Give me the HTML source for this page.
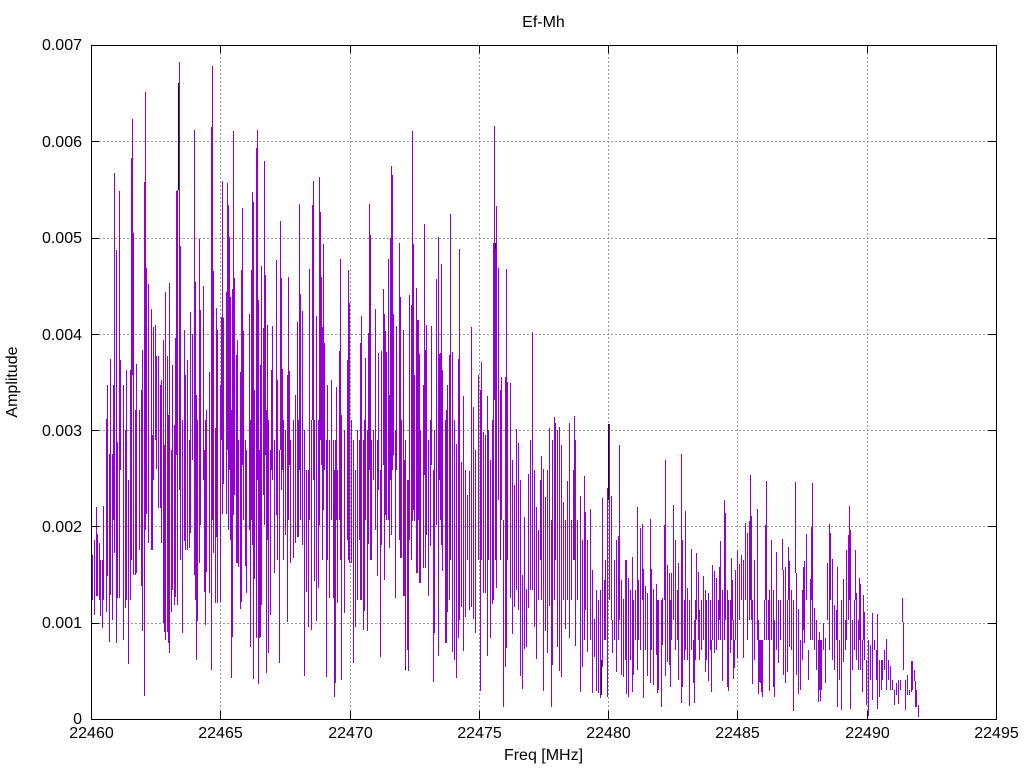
<!DOCTYPE html>
<html><head><meta charset="utf-8"><title>Ef-Mh</title>
<style>html,body{margin:0;padding:0;background:#fff}svg{display:block}text{font-family:"Liberation Sans",sans-serif;font-size:16px;fill:#000}</style></head>
<body>
<svg width="1024" height="768" viewBox="0 0 1024 768" xmlns="http://www.w3.org/2000/svg">
<rect width="1024" height="768" fill="#fff"/>
<g shape-rendering="crispEdges" fill="none">
<path stroke="#999" stroke-dasharray="2 2" d="M99 141.500H988M99 238.500H988M99 334.500H988M99 430.500H988M99 526.500H988M99 623.500H988M220.500 53V711M350.500 53V711M479.500 53V711M608.500 53V711M737.500 53V711M867.500 53V711"/>
<g transform="translate(.5,0)">
<path stroke="#000" d="M178 83V190M495 243V290M608 424V500M601 660V695M405 640V670"/>
<path stroke="#9400d3" d="M91 605V547M92 600V555M94 615V540M96 596V507M97 596V534M99 600V543M100 616V560M102 628V560M103 506V600M106 419V612M107 385V576M109 642V454M110 359V595M112 454V620M113 520V385M114 173V553M116 250V643M117 442V598M119 191V598M120 360V470M123 385V640M125 430V608M126 370V600M128 480V664M130 370V600M131 158V560M132 119V375M133 233V575M135 410V575M136 364V573M139 410V550M141 390V586M142 350V631M144 182V696M145 92V530M146 268V514M148 284V543M151 309V550M152 435V550M153 327V480M155 325V440M156 356V469M158 356V508M160 385V508M161 380V543M163 340V623M164 445V632M165 292V640M167 356V632M168 415V643M169 283V653M171 450V612M172 365V590M174 425V605M175 338V597M176 191V455M177 190V605M179 62V490M180 246V560M182 420V633M184 330V541M185 375V550M187 360V550M189 440V548M190 312V533M192 334V460M194 130V575M195 282V600M196 395V660M197 420V621M199 239V563M200 310V525M203 286V480M204 450V592M205 420V625M206 410V572M209 372V593M211 127V670M212 66V520M213 271V553M215 428V603M216 308V537M217 330V603M220 385V602M221 317V440M222 181V514M223 318V484M226 292V514M227 183V450M228 205V530M229 237V470M230 297V540M231 410V678M232 289V637M233 131V515M234 278V495M236 355V563M237 340V563M238 440V567M240 372V609M241 270V602M242 208V465M243 331V520M245 440V566M246 450V593M249 314V530M250 420V647M251 270V520M252 192V545M253 202V679M254 390V579M256 148V638M257 130V480M258 300V684M259 450V638M260 365V637M261 266V605M263 328V495M264 161V525M265 275V455M266 410V673M267 325V540M268 420V653M270 450V615M271 370V470M272 326V480M274 440V573M276 260V515M277 380V560M279 450V663M280 221V450M281 278V490M282 369V470M283 420V560M285 430V535M287 375V622M288 277V520M289 371V465M290 440V563M293 420V558M295 395V543M297 322V537M298 420V537M299 204V470M300 294V520M302 311V545M304 430V676M306 470V592M308 470V627M309 269V520M311 420V630M312 205V420M313 181V480M314 420V581M316 316V621M318 420V588M319 177V525M320 212V440M321 277V465M322 327V560M323 244V510M324 343V470M326 440V677M327 385V560M329 440V598M331 380V520M333 440V598M334 470V697M335 440V683M336 387V520M337 470V603M339 351V520M340 259V560M341 415V680M344 430V613M347 360V540M348 270V560M349 303V563M351 420V563M353 440V663M355 470V627M357 430V600M359 440V540M360 343V600M361 316V600M363 440V630M364 420V611M365 358V520M367 430V631M368 333V544M369 204V470M370 235V560M371 440V560M373 430V480M375 309V530M377 440V576M378 353V490M380 470V657M381 351V545M383 289V465M384 314V580M385 331V515M386 352V520M388 259V520M389 395V548M390 238V480M391 166V535M392 175V470M393 314V455M395 430V598M396 326V470M399 243V540M400 297V558M401 420V558M403 330V596M404 460V596M405 440V666M407 480V650M408 480V671M409 295V540M411 305V560M412 131V521M413 244V510M414 375V521M416 288V573M417 320V573M418 320V520M419 354V583M420 430V583M423 385V568M424 224V475M425 350V568M426 325V535M428 440V596M430 420V546M431 326V465M433 470V682M434 430V633M436 279V525M438 237V656M439 354V480M440 353V520M441 264V545M442 370V571M445 420V643M446 410V643M447 385V612M449 355V600M450 214V560M452 352V652M454 420V660M456 444V678M458 359V638M459 249V620M461 462V607M463 396V651M465 470V617M467 495V560M469 471V610M471 327V607M473 407V619M475 450V633M478 375V560M480 390V691M481 362V560M483 432V593M485 435V593M487 396V656M488 430V560M490 460V638M492 420V604M494 126V400M493 243V600M495 249V560M496 206V588M498 268V500M500 390V560M501 377V520M503 520V707M505 377V667M506 269V648M507 382V560M510 383V598M512 460V634M514 485V607M516 429V590M518 443V610M520 480V676M522 575V689M524 517V649M526 589V647M528 474V608M530 440V590M532 332V590M534 470V627M536 507V659M538 530V600M540 480V560M541 456V600M543 469V691M545 497V631M547 470V653M549 428V606M551 520V707M552 440V665M554 417V600M555 423V560M557 430V647M559 427V671M561 445V677M563 502V600M565 520V629M567 481V600M569 423V638M571 520V600M573 470V560M574 416V560M575 440V646M577 520V600M580 496V692M582 540V667M584 476V640M585 512V610M587 540V652M590 509V640M592 570V693M594 619V657M596 590V691M598 600V693M600 590V698M602 498V667M604 580V640M605 560V640M607 488V697M609 424V600M611 496V620M612 620V653M614 560V640M616 540V672M618 536V640M619 445V620M621 580V675M623 599V677M625 560V660M626 560V694M628 578V697M630 590V660M632 557V692M633 600V675M635 590V640M637 507V670M638 580V640M640 528V650M642 524V600M643 569V698M645 586V650M647 593V676M650 519V683M651 569V650M653 589V685M656 584V655M657 600V693M658 600V690M661 600V707M662 598V645M664 525V600M665 460V676M667 565V662M669 573V665M670 600V687M671 573V640M673 505V620M675 540V650M677 590V640M678 563V680M681 454V703M682 540V687M684 600V660M685 511V650M687 588V660M689 600V706M691 549V650M693 640V683M694 620V703M695 600V660M696 553V620M698 572V640M699 610V660M701 600V650M703 576V640M705 590V672M706 600V660M708 593V681M710 600V650M711 640V692M712 565V640M714 571V653M716 578V650M718 600V640M719 567V620M720 541V640M722 590V681M724 500V640M725 513V620M727 590V687M728 600V691M730 600V653M731 558V640M732 580V620M733 620V679M734 640V668M735 570V640M737 551V658M739 564V620M741 555V600M743 560V658M745 523V600M747 533V640M749 521V620M750 475V600M751 516V620M752 600V684M754 560V660M757 509V640M758 620V694M759 640V682M760 640V683M761 640V692M762 640V697M764 600V640M765 525V600M766 481V640M768 600V640M769 590V691M771 540V640M773 590V687M774 620V697M776 552V650M778 600V663M780 600V640M782 539V570M783 570V675M785 567V683M787 600V672M788 547V600M789 561V647M791 590V650M793 600V711M795 482V573M796 573V675M798 609V694M800 640V690M802 590V660M803 567V630M804 561V643M806 534V600M808 650V680M810 579V640M811 527V600M812 483V640M814 608V650M816 620V670M818 640V702M819 632V690M820 640V701M821 640V690M823 623V650M825 638V683M827 563V620M829 524V650M830 533V600M832 559V660M834 605V670M836 610V640M837 567V707M839 640V680M841 600V710M843 579V662M845 620V650M846 550V640M848 535V620M849 506V600M850 530V709M852 620V670M854 600V650M855 550V600M856 593V660M858 620V670M859 578V640M860 584V670M862 640V692M863 595V640M864 612V660M866 660V705M868 640V716M870 645V680M872 613V700M874 640V650M876 650V680M877 614V709M879 660V697M881 660V690M882 660V680M884 650V670M886 639V690M888 660V680M890 666V690M892 680V690M894 690V705M896 683V695M898 680V704M900 680V690M902 598V622M903 622V670M905 680V710M907 675V695M909 690V695M911 661V692M912 661V690M914 670V681M915 681V707M916 690V707M918 705V717"/>
</g>
<path stroke="#000" d="M91.500 45V719M996.500 45V719M91 45.500H997M91 719.500H997"/>
<path stroke="#000" d="M91 141.500h8M91 238.500h8M91 334.500h8M91 430.500h8M91 526.500h8M91 623.500h8M988 141.500h8M988 238.500h8M988 334.500h8M988 430.500h8M988 526.500h8M988 623.500h8M220.500 45v8M350.500 45v8M479.500 45v8M608.500 45v8M737.500 45v8M867.500 45v8M220.500 711v8M350.500 711v8M479.500 711v8M608.500 711v8M737.500 711v8M867.500 711v8"/>
</g>
<g text-anchor="end">
<text x="82" y="724">0</text>
<text x="82" y="628">0.001</text>
<text x="82" y="532">0.002</text>
<text x="82" y="436">0.003</text>
<text x="82" y="340">0.004</text>
<text x="82" y="243">0.005</text>
<text x="82" y="147">0.006</text>
<text x="82" y="50">0.007</text>
</g>
<g text-anchor="middle">
<text x="91.500" y="738">22460</text>
<text x="220.500" y="738">22465</text>
<text x="350.500" y="738">22470</text>
<text x="479.500" y="738">22475</text>
<text x="608.500" y="738">22480</text>
<text x="737.500" y="738">22485</text>
<text x="867.500" y="738">22490</text>
<text x="996.500" y="738">22495</text>
<text x="543.500" y="760">Freq [MHz]</text>
<text x="543.500" y="27">Ef-Mh</text>
<text transform="translate(17,382) rotate(-90)">Amplitude</text>
</g>
</svg>
</body></html>
